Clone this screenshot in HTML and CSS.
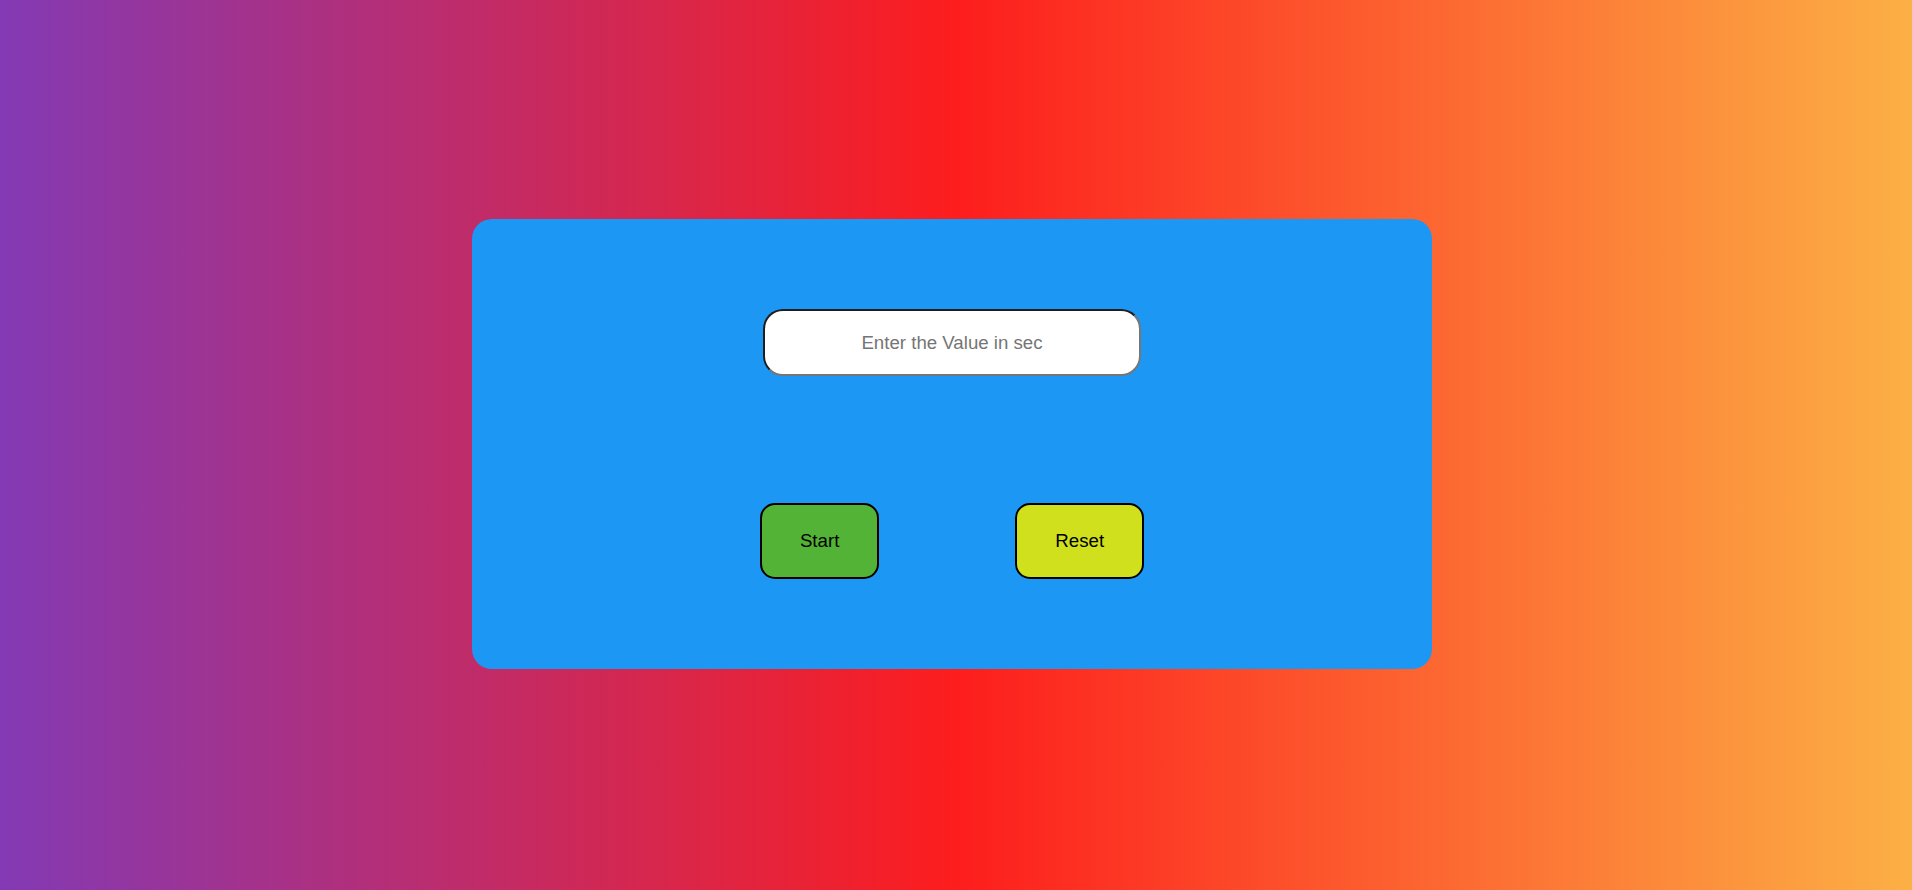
FILE: index.html
```html
<!DOCTYPE html>
<html lang="en">
<head>
<meta charset="utf-8">
<title>Timer</title>
<link rel="stylesheet" href="styles.css">
</head>
<body>
  <main class="card">
    <input class="time-input" type="text" placeholder="Enter the Value in sec">
    <div class="actions">
      <button class="btn btn-start">Start</button>
      <button class="btn btn-reset">Reset</button>
    </div>
  </main>
</body>
</html>
```

FILE: styles.css
```css
html, body {
  margin: 0;
  height: 100%;
}

body {
  background: linear-gradient(to right, #833ab4, #fd1d1d, #fcb045);
  display: flex;
  align-items: center;
  justify-content: center;
  padding-right: 8px;
  padding-bottom: 2px;
  box-sizing: border-box;
  font-family: "Liberation Sans", Arial, sans-serif;
}

.card {
  width: 960px;
  height: 450px;
  box-sizing: border-box;
  background: #1d97f4;
  border-radius: 20px;
  display: flex;
  flex-direction: column;
  align-items: center;
  justify-content: center;
  gap: 127px;
}

.time-input {
  width: 378px;
  height: 67px;
  box-sizing: border-box;
  border-width: 2px;
  border-style: solid;
  border-color: #1e1e1e #767676 #767676 #1e1e1e;
  border-radius: 20px;
  background: #fff;
  font-family: "Liberation Sans", Arial, sans-serif;
  font-size: 18.67px;
  text-align: center;
  color: #000;
  padding: 0 10px;
  outline: none;
}

.time-input::placeholder {
  color: #757575;
}

.actions {
  display: flex;
  gap: 136px;
}

.btn {
  font-family: "Liberation Sans", Arial, sans-serif;
  font-size: 18.67px;
  color: #000;
  padding: 25px 38px;
  border: 2px solid #000;
  border-radius: 15px;
  line-height: normal;
  cursor: pointer;
}

.btn-start {
  background: #52b336;
}

.btn-reset {
  background: #d0e01c;
}
```
